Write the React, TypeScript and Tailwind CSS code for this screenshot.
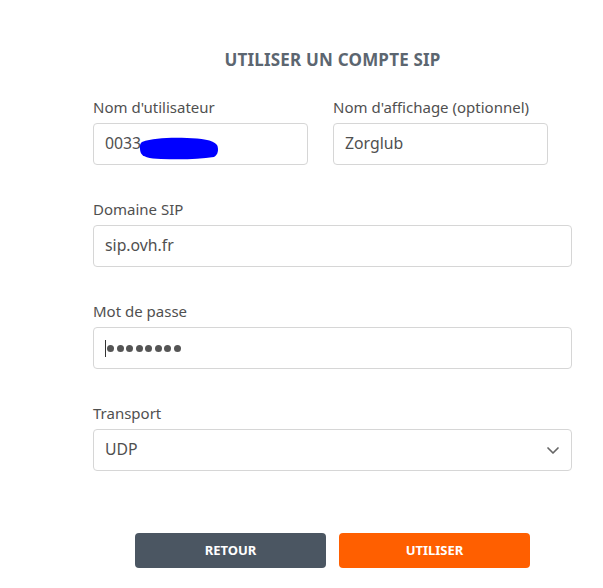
import React from 'react';

const font = { fontFamily: '"Noto Sans", "Open Sans", sans-serif' };

const Label: React.FC<{ children: React.ReactNode }> = ({ children }) => (
    <div className="h-5 text-[15px] leading-5 text-[#505050] mb-[6px]">{children}</div>
);

const Box: React.FC<{ className?: string; children?: React.ReactNode }> = ({ className = '', children }) => (
    <div
        className={`relative flex h-[42px] items-center rounded-[4px] border border-[#d6d6d6] bg-white px-[11px] text-[15.8px] text-[#4f4f4f] ${className}`}
    >
        {children}
    </div>
);

export default function App() {
    return (
        <div className="min-h-[588px] w-[603px] bg-white" style={font}>
            <div className="ml-[93px] w-[479px] pt-[48px]">
                <h1 className="text-center text-[17px] font-bold leading-6 tracking-[0.2px] text-[#5c6670]">
                    UTILISER UN COMPTE SIP
                </h1>

                <div className="mt-[25px] flex gap-[25px]">
                    <div className="w-[215px]">
                        <Label>Nom d'utilisateur</Label>
                        <Box>
                            <span>0033</span>
                            <svg className="absolute left-[45px] top-[13px]" width="81" height="23" viewBox="0 0 81 23">
                                <path
                                    d="M3 5 C14 1 30 0.5 48 1 C62 1.5 74 2.5 78 8 C80 12 79 18 75 20 C60 22.5 40 22.5 22 22 C10 21.5 3 20 1.5 15 C0.5 10 0.5 7 3 5 Z"
                                    fill="#0000ff"
                                />
                            </svg>
                        </Box>
                    </div>
                    <div className="w-[215px]">
                        <Label>Nom d'affichage (optionnel)</Label>
                        <Box>Zorglub</Box>
                    </div>
                </div>

                <div className="mt-[34px]">
                    <Label>Domaine SIP</Label>
                    <Box>sip.ovh.fr</Box>
                </div>

                <div className="mt-[34px]">
                    <Label>Mot de passe</Label>
                    <Box>
                        <span className="mr-[1px] h-[17px] w-px bg-[#333]" />
                        <span className="flex gap-[2.5px]">
                            {Array.from({ length: 8 }).map((_, i) => (
                                <span key={i} className="h-[7px] w-[7px] rounded-full bg-[#555]" />
                            ))}
                        </span>
                    </Box>
                </div>

                <div className="mt-[34px]">
                    <Label>Transport</Label>
                    <Box className="justify-between pr-[11px]">
                        <span>UDP</span>
                        <svg width="14" height="14" viewBox="0 0 14 14" fill="none">
                            <path d="M2 5 L7 10 L12 5" stroke="#666" strokeWidth="1.7" strokeLinecap="round" strokeLinejoin="round" />
                        </svg>
                    </Box>
                </div>

                <div className="mt-[62px] flex justify-center gap-[13px]">
                    <button className="h-[35px] w-[191px] rounded-[4px] bg-[#4b5662] text-[13px] font-bold text-white">
                        RETOUR
                    </button>
                    <button className="h-[35px] w-[191px] rounded-[4px] bg-[#ff5f00] text-[13px] font-bold text-white">
                        UTILISER
                    </button>
                </div>
            </div>
        </div>
    );
}
